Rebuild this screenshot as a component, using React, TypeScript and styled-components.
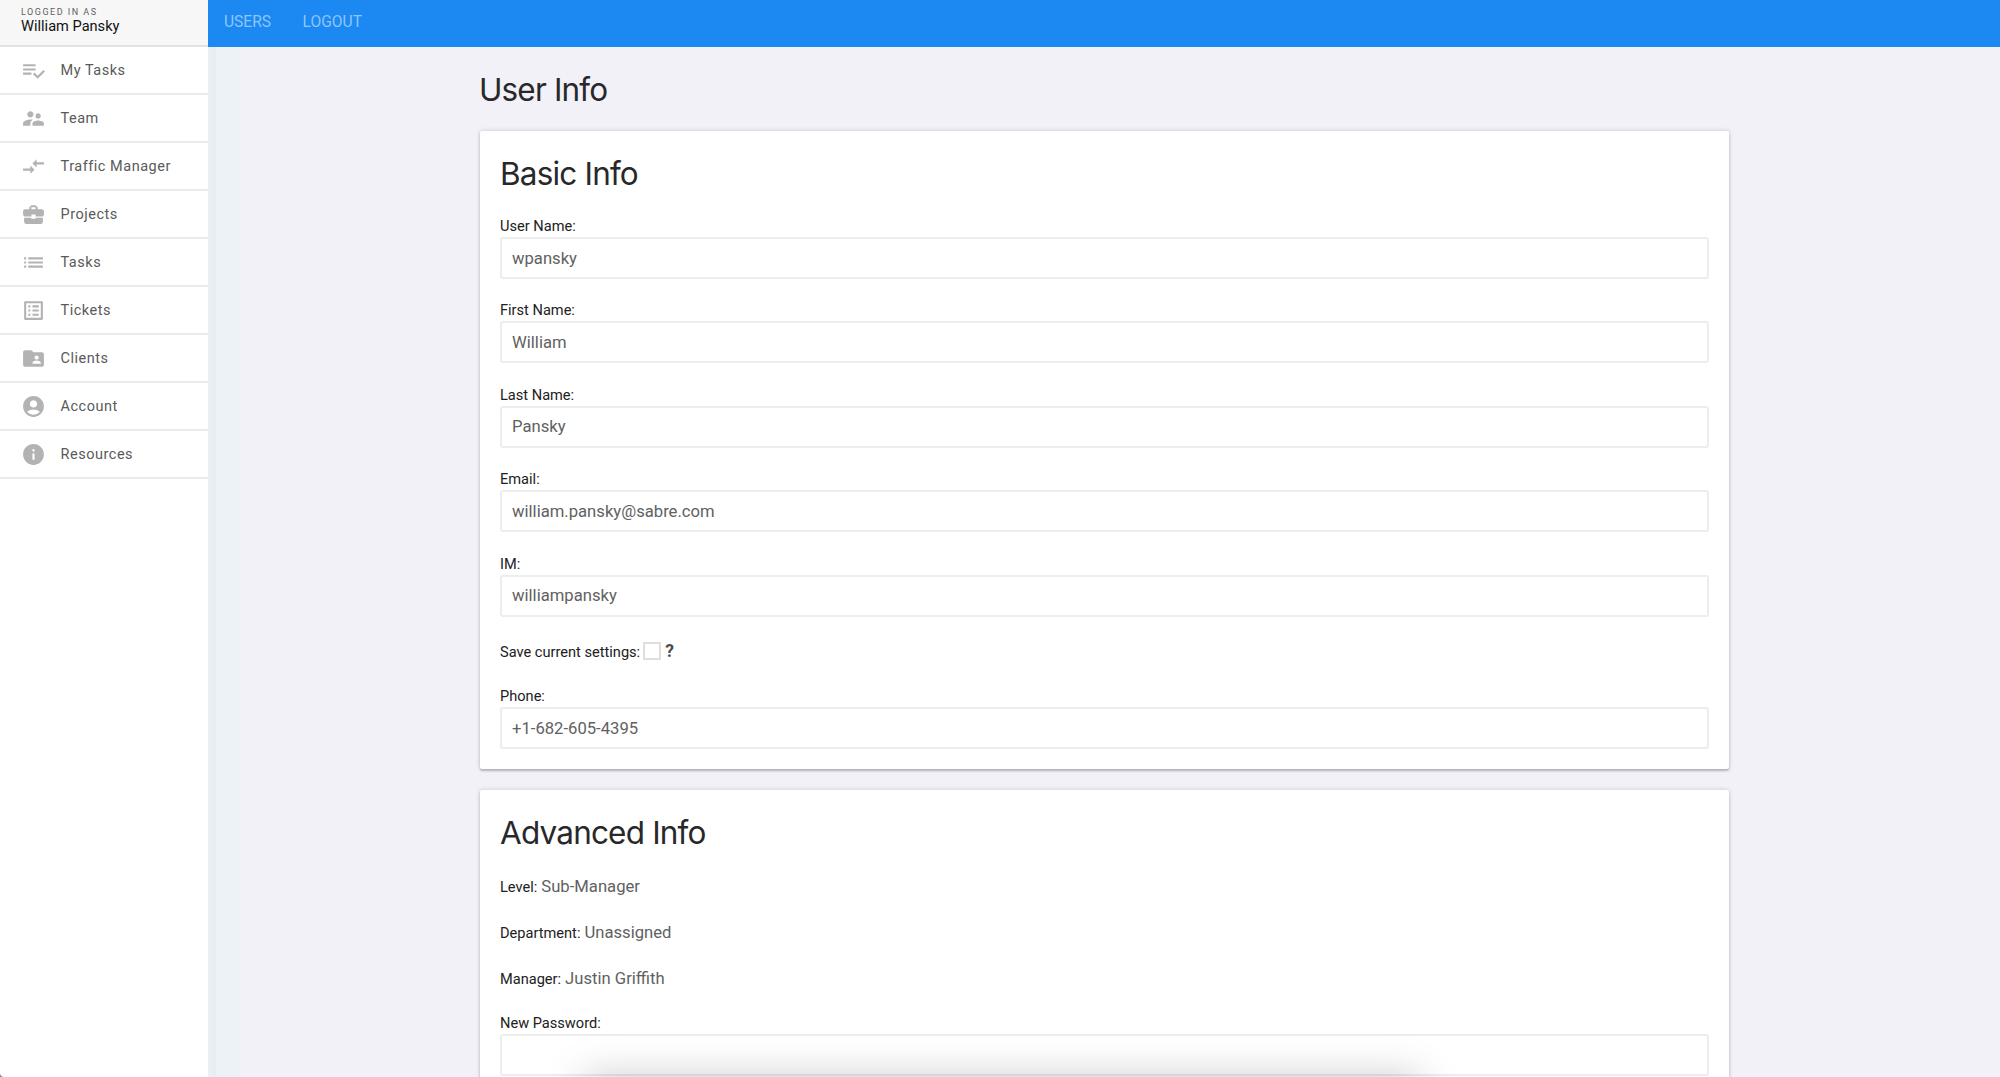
import React from "react";
import styled, { createGlobalStyle } from "styled-components";
import {
  MdSupervisorAccount,
  MdCompareArrows,
  MdBusinessCenter,
  MdList,
  MdListAlt,
  MdFolderShared,
  MdAccountCircle,
  MdInfo,
} from "react-icons/md";

const Global = createGlobalStyle`
  *, *::before, *::after { box-sizing: border-box; }
  html, body { margin: 0; height: 1077px; overflow: hidden; }
  body { background: #f2f1f7; font-family: Roboto, "Liberation Sans", sans-serif; color: #212121; }
`;

const Page = styled.div`
  display: grid;
  grid-template-columns: 208px 1fr;
  grid-template-rows: 47px 1030px;
  height: 1077px;
  overflow: hidden;
`;

const Sidebar = styled.aside`
  grid-row: 1 / 3;
  background: #fff;
  z-index: 1;
`;

const Identity = styled.div`
  height: 47px;
  padding: 6px 21px 0;
  background: #f7f7f7;
  border-bottom: 2px solid #e2e2e2;
`;

const Caption = styled.div`
  font-size: 9px;
  line-height: 12px;
  letter-spacing: 1.5px;
  color: #616161;
  text-transform: uppercase;
`;

const Person = styled.div`
  font-size: 14.6px;
  line-height: 17px;
  color: #111;
`;

const NavItem = styled.a`
  display: flex;
  align-items: center;
  height: 48px;
  padding: 0 0 0 21px;
  gap: 14.5px;
  border-bottom: 2px solid #ebebeb;
  font-size: 14.5px;
  line-height: 18px;
  letter-spacing: 0.52px;
  color: #5a5a5a;
  svg { width: 25px; height: 25px; fill: #b3b3b3; color: #b3b3b3; }
`;

const NavText = styled.span`
  padding-top: 1px;
`;

const TopBar = styled.nav`
  display: flex;
  gap: 31.5px;
  padding: 11px 16px 0;
  background: #1c88f1;
`;

const TopLink = styled.a`
  font-size: 15.6px;
  line-height: 22px;
  color: #8cc6fb;
`;

const Main = styled.main`
  padding: 21px 271px 0 271px;
  overflow: hidden;
  background: linear-gradient(90deg, #eaf0f3 0, #e6edf0 8px, #ecf2f6 8px, #ecf2f6 30px, #f2f1f7 33px);
`;

const PageTitle = styled.h1`
  margin: 0 0 19px;
  font: 400 31.5px/44px Inter, sans-serif;
  letter-spacing: -0.85px;
  color: #28282b;
`;

const Card = styled.section`
  height: ${(p: { $height: number }) => p.$height}px;
  margin: 0 0 21px 1px;
  padding: 21px 20px;
  background: #fff;
  border-radius: 2px;
  box-shadow: 0 2px 2px rgba(60, 60, 70, 0.28), 0 0 4px rgba(60, 60, 80, 0.22);
`;

const CardTitle = styled.h2`
  margin: 0 0 18px;
  font: 400 31.5px/44px Inter, sans-serif;
  letter-spacing: -0.82px;
  color: #28282b;
`;

const Field = styled.div`
  height: 84.4px;
`;

const Label = styled.label`
  font-size: 14.6px;
  line-height: 24px;
  color: #212121;
`;

const FieldLabel = styled(Label)`
  display: block;
  height: 23px;
  line-height: 25px;
`;

const Input = styled.input`
  display: block;
  width: 100%;
  height: 42px;
  padding: 0 10px;
  border: 2px solid #ededed;
  border-radius: 3px;
  outline: none;
  background: #fff;
  font: 400 16.65px Roboto, sans-serif;
  color: #616161;
`;

const CheckRow = styled.div`
  display: flex;
  align-items: center;
  height: 31px;
  margin-bottom: 17.3px;
`;

const CheckLabel = styled(Label)`
  padding-top: 1px;
`;

const DetailRow = styled.div`
  display: flex;
  align-items: baseline;
  height: 28px;
  margin-bottom: 18px;
`;

const Value = styled.span`
  margin-left: 4px;
  font-size: 16.65px;
  line-height: 28px;
  color: #616161;
`;

const CheckBox = styled.span`
  width: 18px;
  height: 18px;
  margin-left: 3px;
  border: 2px solid #dedede;
`;

const Help = styled.b`
  margin-left: 4px;
  font-size: 17.5px;
  line-height: 24px;
  color: #4a4a4a;
`;

const DockShadow = styled.div`
  position: absolute;
  left: 584px;
  top: 1079px;
  width: 836px;
  height: 30px;
  box-shadow: 0 0 40px rgba(0, 0, 0, 0.25);
`;

const WindowCorner = styled.div`
  position: absolute;
  left: 0;
  top: 1074px;
  width: 3px;
  height: 3px;
  z-index: 2;
  background: radial-gradient(circle at 100% 0, transparent 2px, #777 3.5px);
`;

// Three rules with a separate tick at the lower right.
function PlaylistCheck() {
  return (
    <svg viewBox="0 0 24 24">
      <path d="M14 10H2v2h12v-2zm0-4H2v2h12V6zM2 16h8v-2H2v2zm19.5-4.5L23 13l-6.99 7-4.51-4.5L13 14l3.01 3 5.49-5.5z" />
    </svg>
  );
}

const nav: { label: string; Icon: React.ComponentType }[] = [
  { label: "My Tasks", Icon: PlaylistCheck },
  { label: "Team", Icon: MdSupervisorAccount },
  { label: "Traffic Manager", Icon: MdCompareArrows },
  { label: "Projects", Icon: MdBusinessCenter },
  { label: "Tasks", Icon: MdList },
  { label: "Tickets", Icon: MdListAlt },
  { label: "Clients", Icon: MdFolderShared },
  { label: "Account", Icon: MdAccountCircle },
  { label: "Resources", Icon: MdInfo },
];

const fields = [
  ["User Name:", "wpansky"],
  ["First Name:", "William"],
  ["Last Name:", "Pansky"],
  ["Email:", "william.pansky@sabre.com"],
  ["IM:", "williampansky"],
];

const details = [
  ["Level:", "Sub-Manager"],
  ["Department:", "Unassigned"],
  ["Manager:", "Justin Griffith"],
];

function TextField({ label, value }: { label: string; value: string }) {
  return (
    <Field>
      <FieldLabel>{label}</FieldLabel>
      <Input defaultValue={value} />
    </Field>
  );
}

export default function App() {
  return (
    <>
      <Global />
      <Page>
        <Sidebar>
          <Identity>
            <Caption>Logged in as</Caption>
            <Person>William Pansky</Person>
          </Identity>
          {nav.map(({ label, Icon }) => (
            <NavItem key={label}>
              <Icon />
              <NavText>{label}</NavText>
            </NavItem>
          ))}
        </Sidebar>
        <TopBar>
          <TopLink>USERS</TopLink>
          <TopLink>LOGOUT</TopLink>
        </TopBar>
        <Main>
          <PageTitle>User Info</PageTitle>
          <Card $height={638}>
            <CardTitle>Basic Info</CardTitle>
            {fields.map(([label, value]) => (
              <TextField key={label} label={label} value={value} />
            ))}
            <CheckRow>
              <CheckLabel>Save current settings:</CheckLabel>
              <CheckBox />
              <Help>?</Help>
            </CheckRow>
            <TextField label="Phone:" value="+1-682-605-4395" />
          </Card>
          <Card $height={400}>
            <CardTitle>Advanced Info</CardTitle>
            {details.map(([label, value]) => (
              <DetailRow key={label}>
                <Label>{label}</Label>
                <Value>{value}</Value>
              </DetailRow>
            ))}
            <TextField label="New Password:" value="" />
          </Card>
        </Main>
      </Page>
      <DockShadow />
      <WindowCorner />
    </>
  );
}
